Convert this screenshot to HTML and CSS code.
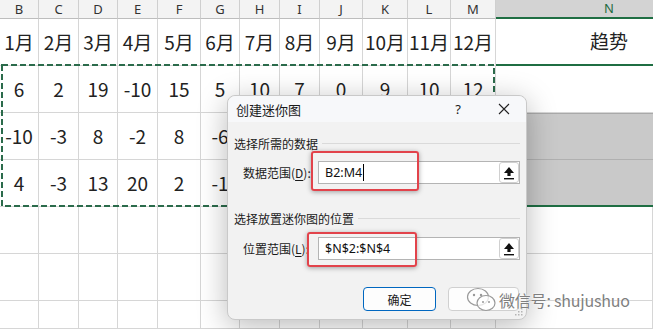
FILE: index.html
```html
<!DOCTYPE html>
<html lang="zh">
<head>
<meta charset="utf-8">
<link rel="stylesheet" href="styles.css">
</head>
<body>
<div class="sheet">
  <div class="hd">B</div><div class="hd">C</div><div class="hd">D</div><div class="hd">E</div><div class="hd">F</div><div class="hd">G</div><div class="hd">H</div><div class="hd">I</div><div class="hd">J</div><div class="hd">K</div><div class="hd">L</div><div class="hd">M</div><div class="hd hd-sel">N</div>

  <div class="c">1月</div><div class="c">2月</div><div class="c">3月</div><div class="c">4月</div><div class="c">5月</div><div class="c">6月</div><div class="c">7月</div><div class="c">8月</div><div class="c">9月</div><div class="c">10月</div><div class="c">11月</div><div class="c">12月</div><div class="c n1">趋势</div>

  <div class="c">6</div><div class="c">2</div><div class="c">19</div><div class="c">-10</div><div class="c">15</div><div class="c">5</div><div class="c">10</div><div class="c">7</div><div class="c">0</div><div class="c">9</div><div class="c">10</div><div class="c">12</div><div class="c n2"></div>

  <div class="c">-10</div><div class="c">-3</div><div class="c">8</div><div class="c">-2</div><div class="c">8</div><div class="c">-6</div><div class="c"></div><div class="c"></div><div class="c"></div><div class="c"></div><div class="c"></div><div class="c"></div><div class="c n3"></div>

  <div class="c">4</div><div class="c">-3</div><div class="c">13</div><div class="c">20</div><div class="c">2</div><div class="c">-1</div><div class="c"></div><div class="c"></div><div class="c"></div><div class="c"></div><div class="c"></div><div class="c"></div><div class="c n4"></div>

  <div class="c"></div><div class="c"></div><div class="c"></div><div class="c"></div><div class="c"></div><div class="c"></div><div class="c"></div><div class="c"></div><div class="c"></div><div class="c"></div><div class="c"></div><div class="c"></div><div class="c"></div>
  <div class="c"></div><div class="c"></div><div class="c"></div><div class="c"></div><div class="c"></div><div class="c"></div><div class="c"></div><div class="c"></div><div class="c"></div><div class="c"></div><div class="c"></div><div class="c"></div><div class="c"></div>
  <div class="c"></div><div class="c"></div><div class="c"></div><div class="c"></div><div class="c"></div><div class="c"></div><div class="c"></div><div class="c"></div><div class="c"></div><div class="c"></div><div class="c"></div><div class="c"></div><div class="c"></div>
</div>

<svg class="marquee" width="496" height="144" viewBox="0 0 496 144">
  <rect x="2" y="1" width="492" height="141" fill="none" stroke="#2b6b4b" stroke-width="2" stroke-dasharray="6 3"/>
</svg>

<div class="dialog">
  <div class="titlebar">
    <span class="title">创建迷你图</span>
    <span class="help">?</span>
    <svg class="close" width="12" height="12" viewBox="0 0 12 12"><path d="M1 1 L11 11 M11 1 L1 11" stroke="#222" stroke-width="1.1" fill="none"/></svg>
  </div>
  <div class="section s1"><span>选择所需的数据</span><i class="rule"></i></div>
  <div class="field f1">
    <span class="label">数据范围(<u>D</u>):</span>
    <div class="input"><span class="val">B2:M4</span><i class="caret"></i>
      <span class="pick"><svg width="12" height="14" viewBox="0 0 12 14"><path d="M6 1 L11 7 L7.6 7 L7.6 10 L4.4 10 L4.4 7 L1 7 Z" fill="#111"/><rect x="1" y="12" width="10" height="1.4" fill="#111"/></svg></span>
    </div>
  </div>
  <div class="section s2"><span>选择放置迷你图的位置</span><i class="rule"></i></div>
  <div class="field f2">
    <span class="label">位置范围(<u>L</u>):</span>
    <div class="input"><span class="val">$N$2:$N$4</span>
      <span class="pick"><svg width="12" height="14" viewBox="0 0 12 14"><path d="M6 1 L11 7 L7.6 7 L7.6 10 L4.4 10 L4.4 7 L1 7 Z" fill="#111"/><rect x="1" y="12" width="10" height="1.4" fill="#111"/></svg></span>
    </div>
  </div>
  <div class="buttons">
    <span class="btn ok">确定</span>
    <span class="btn cancel">取消</span>
  </div>
  <svg class="grip" width="9" height="9" viewBox="0 0 9 9"><g fill="#b5b5b5"><rect x="7" y="1" width="1.5" height="1.5"/><rect x="4" y="4" width="1.5" height="1.5"/><rect x="7" y="4" width="1.5" height="1.5"/><rect x="1" y="7" width="1.5" height="1.5"/><rect x="4" y="7" width="1.5" height="1.5"/><rect x="7" y="7" width="1.5" height="1.5"/></g></svg>
</div>

<div class="mark mark1"></div>
<div class="mark mark2"></div>

<div class="watermark">
  <svg width="32" height="26" viewBox="0 0 32 26">
    <ellipse cx="12" cy="10" rx="10.5" ry="8.5" fill="rgba(255,255,255,0.6)" stroke="#9a9a9a" stroke-width="1.2"/>
    <ellipse cx="20" cy="16" rx="9" ry="7.5" fill="rgba(255,255,255,0.75)" stroke="#9a9a9a" stroke-width="1.2"/>
    <circle cx="8" cy="8" r="1.2" fill="#999"/><circle cx="15" cy="8" r="1.2" fill="#999"/>
    <circle cx="17" cy="15" r="1" fill="#999"/><circle cx="23" cy="15" r="1" fill="#999"/>
  </svg>
  <span class="wm-text">微信号: shujushuo</span>
</div>
</body>
</html>
```

FILE: styles.css
```css
html, body {
  margin: 0;
  padding: 0;
}
body {
  width: 653px;
  height: 329px;
  overflow: hidden;
  position: relative;
  background: #fff;
  font-family: "Noto Sans CJK SC", "Noto Sans", sans-serif;
}
.sheet {
  display: grid;
  grid-template-columns: 39px 40px 39px 40px 43px 39px 40px 40px 43px 45px 43px 45px 157px;
  grid-template-rows: 19px 47px 47px 47px 47px 47px 47px 28px;
  width: 653px;
  height: 329px;
  overflow: hidden;
}
.hd {
  box-sizing: border-box;
  border-right: 1px solid #cfcfcf;
  border-bottom: 1px solid #bdbdbd;
  background: #f3f3f3;
  font-family: "Noto Sans", sans-serif;
  font-size: 13px;
  color: #333;
  display: flex;
  align-items: center;
  justify-content: center;
  line-height: 1;
}
.hd-sel {
  background: #d3d3d3;
  color: #1e6b41;
  border-bottom: 2px solid #1f6e43;
  border-right: 0;
  padding-left: 69px;
}
.c {
  box-sizing: border-box;
  border-right: 1px solid #d6d6d6;
  border-bottom: 1px solid #d6d6d6;
  display: flex;
  align-items: center;
  justify-content: center;
  font-size: 19px;
  color: #222;
  line-height: 1;
  padding-bottom: 2px;
  overflow: hidden;
}
.n1 {
  border-bottom: 2px solid #1f6e43;
  border-right: 0;
  padding-left: 69px;
}
.n2, .n3, .n4 {
  border-right: 0;
}
.n3 {
  background: #c9c9c9;
  border-top: 1px solid #a9a9a9;
  border-bottom: 1px solid #b0b0b0;
}
.n4 {
  background: #c9c9c9;
  border-bottom: 2px solid #1f6e43;
}
.marquee {
  position: absolute;
  left: 0;
  top: 64px;
}
.dialog {
  position: absolute;
  left: 227px;
  top: 95px;
  width: 300px;
  height: 225px;
  box-sizing: border-box;
  background: #f2f2f2;
  border: 1px solid #c9c9c9;
  border-radius: 8px;
  box-shadow: 0 6px 30px rgba(0, 0, 0, 0.28);
  font-size: 12px;
  color: #1a1a1a;
  display: flex;
  flex-direction: column;
}
.titlebar {
  height: 26px;
  display: flex;
  align-items: center;
  padding-left: 8px;
  background: #f7f8fa;
  border-radius: 8px 8px 0 0;
}
.title {
  font-size: 13px;
  flex: 1;
}
.help {
  font-family: "Noto Sans", sans-serif;
  font-size: 13px;
  margin-right: 37px;
}
.close {
  margin-right: 16px;
}
.section {
  display: flex;
  align-items: center;
  padding: 0 6px 0 6px;
  height: 16px;
  gap: 4px;
}
.s1 { margin-top: 13px; }
.s2 { margin-top: 26px; }
.rule {
  flex: 1;
  height: 1px;
  background: #dadada;
}
.field {
  display: flex;
  align-items: center;
  padding-left: 15px;
  height: 23px;
}
.f1 { margin-top: 10px; }
.f2 { margin-top: 11px; }
.label {
  width: 75px;
  flex: none;
}
.label u {
  text-decoration: underline;
  text-underline-offset: 2px;
}
.input {
  width: 202px;
  height: 23px;
  box-sizing: border-box;
  background: #fff;
  border: 1px solid #b4b4b4;
  display: flex;
  align-items: center;
  padding-left: 6px;
}
.val {
  font-family: "Noto Sans", sans-serif;
  font-size: 12.5px;
  color: #111;
  flex: none;
}
.caret {
  width: 1px;
  height: 17px;
  background: #000;
  margin-left: 1px;
}
.pick {
  margin-left: auto;
  width: 20px;
  height: 21px;
  box-sizing: border-box;
  border: 1px solid #d0d0d0;
  border-radius: 3px;
  background: #fff;
  display: flex;
  align-items: center;
  justify-content: center;
}
.buttons {
  display: flex;
  padding-left: 135px;
  gap: 12px;
  margin-top: 27px;
}
.btn {
  height: 24px;
  box-sizing: border-box;
  border-radius: 4px;
  display: flex;
  align-items: center;
  justify-content: center;
  background: #fdfdfd;
}
.ok {
  width: 73px;
  border: 1px solid #0067c0;
}
.cancel {
  width: 71px;
  border: 1px solid #d0d0d0;
  color: transparent;
}
.grip {
  position: absolute;
  right: 3px;
  bottom: 3px;
}
.mark {
  position: absolute;
  border: 2px solid #e2434b;
  border-radius: 3px;
  box-shadow: 0 1px 5px rgba(0, 0, 0, 0.35);
}
.mark1 {
  left: 311px;
  top: 151px;
  width: 104px;
  height: 36px;
}
.mark2 {
  left: 307px;
  top: 232px;
  width: 106px;
  height: 31px;
}
.watermark {
  position: absolute;
  left: 466px;
  top: 287px;
  display: flex;
  align-items: center;
  gap: 1px;
}
.wm-text {
  font-size: 16px;
  color: #7f7f7f;
  text-shadow: 0 0 1px #fff, 0 0 2px #fff;
  letter-spacing: -0.2px;
}
```
